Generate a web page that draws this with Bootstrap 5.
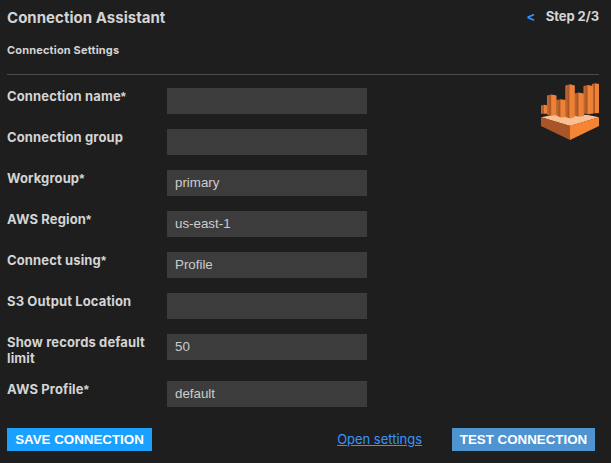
<!DOCTYPE html>
<html lang="en">
<head>
<meta charset="utf-8">
<meta name="viewport" content="width=device-width, initial-scale=1">
<title>Connection Assistant</title>
<link href="https://cdn.jsdelivr.net/npm/bootstrap@5.3.0/dist/css/bootstrap.min.css" rel="stylesheet">
<style>
body{background:#1e1e1e;color:#d4d4d4;font-family:Inter,"Liberation Sans",sans-serif;font-size:13px;line-height:16px;height:463px;overflow:hidden}
.assistant{padding:7px 12px 0 7px}
.title{font-size:15px;line-height:22px;font-weight:700;letter-spacing:.03px}
.step{font-size:13px;line-height:18px;font-weight:700;letter-spacing:-.08px}
.back{color:#3794ff;margin-right:10.500px;text-decoration:none}
.subtitle{font-size:11px;line-height:14px;font-weight:700;margin:14px 0 17px;letter-spacing:.16px}
.rule{height:1px;background:#4b4b4b;margin-bottom:13px}
.setting{margin-bottom:15px}
.setting label{width:160px;padding-right:10px;font-weight:700;letter-spacing:.13px}
.star{font-family:"Liberation Sans",Arial,sans-serif;font-size:13px;line-height:1}
.setting input{width:200px;height:26px;padding:0 8px;background:#3c3c3c;color:#ccc;border:0;border-radius:0;font:13.333px/26px "Liberation Sans",Arial,sans-serif}
.service-logo{width:58px;height:58px;margin-top:-5px}
.action{height:23px;padding:0;border:0;border-radius:0;color:#fff;font:700 13.333px/23px "Liberation Sans",Arial,sans-serif}
.save{background:#1aa0ff;width:145px}
.test{background:#4f94d0;width:143px;margin-right:4px}
.open-link{color:#3794ff;margin-right:30px;padding-bottom:1px;letter-spacing:-.02px}
.actions{margin-top:6px}
</style>
<script src="https://cdn.jsdelivr.net/npm/bootstrap@5.3.0/dist/js/bootstrap.bundle.min.js"></script>
</head>
<body>
<main class="assistant">
<header class="d-flex justify-content-between">
<h1 class="title m-0">Connection Assistant</h1>
<div class="step"><a class="back" href="#">&lt;</a><span>Step 2/3</span></div>
</header>
<h2 class="subtitle">Connection Settings</h2>
<div class="rule"></div>
<section class="d-flex justify-content-between align-items-start">
<form>
<div class="setting d-flex align-items-start"><label for="f1">Connection name<span class="star">*</span></label><input id="f1" class="form-control"></div>
<div class="setting d-flex align-items-start"><label for="f2">Connection group</label><input id="f2" class="form-control"></div>
<div class="setting d-flex align-items-start"><label for="f3">Workgroup<span class="star">*</span></label><input id="f3" class="form-control" value="primary"></div>
<div class="setting d-flex align-items-start"><label for="f4">AWS Region<span class="star">*</span></label><input id="f4" class="form-control" value="us-east-1"></div>
<div class="setting d-flex align-items-start"><label for="f5">Connect using<span class="star">*</span></label><input id="f5" class="form-control" value="Profile"></div>
<div class="setting d-flex align-items-start"><label for="f6">S3 Output Location</label><input id="f6" class="form-control"></div>
<div class="setting d-flex align-items-start"><label for="f7">Show records default limit</label><input id="f7" class="form-control" value="50"></div>
<div class="setting d-flex align-items-start"><label for="f8">AWS Profile<span class="star">*</span></label><input id="f8" class="form-control" value="default"></div>
</form>
<svg class="service-logo" viewBox="0 0 58 58" aria-hidden="true">
<defs><linearGradient id="bar"><stop offset="0" stop-color="#c96d33"/><stop offset=".36" stop-color="#a85628"/><stop offset=".5" stop-color="#f08236"/><stop offset="1" stop-color="#ee8035"/></linearGradient></defs>
<path fill="#fbbf93" d="M0 34.300l11-2.300 18-1 18 1 11 2.300-29 8.700z"/>
<g fill="url(#bar)">
<path d="M0 22.500l3-.700 3.500.700v8.300H0z"/>
<path d="M15.300 17l4-.700 5.500.700v17l-5 .500-4.500-2z"/>
<path d="M6 12.500l4.500-1 5 1V32l-4.500.800-5-1z"/>
<path d="M33.300 10.500l4-1 5.700 1V33l-5 .800-4.700-1z"/>
<path d="M24.300 2.500l4.500-1.300 5 1.300v31.500l-4.500 1.500-5-1.500z"/>
<path d="M51 1l3-.800 4 .800v29l-7 .500z"/>
<path d="M42.500 3l4.500-1 5 1v27.500l-4.500.800-5-.800z"/>
</g>
<path fill="#a85628" d="M0 34.300l29 8.500V57L0 43z"/>
<path fill="#f58534" d="M58 34.300l-29 8.500V57l29-14z"/>
</svg>
</section>
<div class="actions d-flex align-items-center">
<button class="btn action save text-nowrap">SAVE CONNECTION</button>
<a class="open-link ms-auto" href="#">Open settings</a>
<button class="btn action test text-nowrap">TEST CONNECTION</button>
</div>
</main>
</body>
</html>
